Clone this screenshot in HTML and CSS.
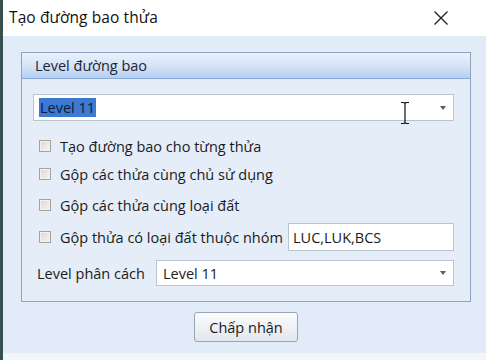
FILE: index.html
```html
<!DOCTYPE html>
<html lang="vi">
<head>
<meta charset="utf-8">
<title>Tạo đường bao thửa</title>
<link rel="stylesheet" href="styles.css">
</head>
<body>
<div class="window">
  <div class="titlebar">
    <span class="title">Tạo đường bao thửa</span>
    <svg class="close" width="16" height="16" viewBox="0 0 16 16"><path d="M1.5 1.5 L14.5 14.5 M14.5 1.5 L1.5 14.5" stroke="#1e1e1e" stroke-width="1.3" fill="none"/></svg>
  </div>
  <div class="content">
    <div class="group">
      <div class="group-head">Level đường bao</div>
      <div class="group-body">
        <div class="combo combo-main">
          <span class="sel">Level 11</span>
          <span class="caret"></span>
          <svg class="ibeam" width="10" height="24" viewBox="0 0 10 24"><path d="M1 1.5 H4 L5 2.5 L6 1.5 H9 M5 2.5 V21.5 M1 22.5 H4 L5 21.5 L6 22.5 H9" stroke="#111" stroke-width="1.2" fill="none"/></svg>
        </div>
        <div class="check"><span class="box"></span><span class="label">Tạo đường bao cho từng thửa</span></div>
        <div class="check"><span class="box"></span><span class="label">Gộp các thửa cùng chủ sử dụng</span></div>
        <div class="check third"><span class="box"></span><span class="label">Gộp các thửa cùng loại đất</span></div>
        <div class="check-row">
          <div class="check clip"><span class="box"></span><span class="label">Gộp thửa có loại đất thuộc nhóm</span></div>
          <div class="textbox">LUC,LUK,BCS</div>
        </div>
        <div class="field-row">
          <span class="field-label">Level phân cách</span>
          <div class="combo combo-small"><span class="value">Level 11</span><span class="caret"></span></div>
        </div>
      </div>
    </div>
    <div class="actions"><button class="btn" type="button">Chấp nhận</button></div>
  </div>
  <div class="bottom"></div>
</div>
</body>
</html>
```

FILE: styles.css
```css
html, body {
  margin: 0;
  padding: 0;
  background: #ffffff;
}
body {
  width: 486px;
  height: 360px;
  overflow: hidden;
  font-family: "Open Sans", "Noto Sans", "DejaVu Sans", sans-serif;
  color: #1b1b1b;
}
.window {
  width: 486px;
  height: 360px;
  box-sizing: border-box;
  border-left: 3px solid #37504d;
  display: flex;
  flex-direction: column;
}
.titlebar {
  height: 36px;
  flex: 0 0 36px;
  background: #ffffff;
  display: flex;
  align-items: center;
  justify-content: space-between;
  padding: 0 37px 2px 6px;
  box-sizing: border-box;
}
.title {
  font-size: 15.5px;
  color: #111;
  letter-spacing: 0.1px;
}
.close {
  display: block;
  margin-top: 1px;
}
.content {
  flex: 0 0 317px;
  height: 317px;
  box-sizing: border-box;
  background: #e2ebf8;
  padding: 16px 15px 0 18px;
  display: flex;
  flex-direction: column;
}
.group {
  height: 250px;
  box-sizing: border-box;
  border: 1px solid #8fa3c0;
  background: #e5edf9;
  display: flex;
  flex-direction: column;
}
.group-head {
  height: 26px;
  flex: 0 0 26px;
  box-sizing: border-box;
  border-bottom: 1px solid #88aadb;
  background: linear-gradient(to bottom, #eaf1fb 0%, #d6e4f7 50%, #b6cff1 100%);
  padding-left: 13px;
  display: flex;
  align-items: center;
  font-size: 14.5px;
  color: #1d2433;
}
.group-body {
  padding: 15px 16px 0 11px;
  display: flex;
  flex-direction: column;
}
.combo {
  position: relative;
  box-sizing: border-box;
  border: 1px solid #b9c4d3;
  background: #ffffff;
  display: flex;
  align-items: center;
  font-size: 14.5px;
}
.combo-main {
  height: 27px;
  padding-left: 5px;
}
.sel {
  background: #3c7ad2;
  color: #0d1a38;
  padding: 0 1px;
  line-height: 19px;
  height: 19px;
}
.caret {
  position: absolute;
  right: 7px;
  top: 50%;
  margin-top: -2px;
  width: 0;
  height: 0;
  border-left: 3.5px solid transparent;
  border-right: 3.5px solid transparent;
  border-top: 4px solid #5c5c5c;
}
.ibeam {
  position: absolute;
  left: 366px;
  top: 6px;
}
.check {
  height: 28px;
  display: flex;
  align-items: center;
  padding-left: 6px;
  font-size: 14.5px;
  white-space: nowrap;
}
.combo-main + .check {
  margin-top: 11px;
}
.check.third {
  margin-top: 3px;
}
.box {
  width: 12px;
  height: 12px;
  flex: 0 0 12px;
  box-sizing: border-box;
  border: 1px solid #a3a3a3;
  background: linear-gradient(135deg, #d9d5cf 0%, #ece9e4 55%, #f7f6f3 100%);
  box-shadow: inset 0 0 0 1px #f4f2ee;
  margin-right: 9px;
}
.check-row {
  height: 30px;
  margin-top: 3px;
  display: flex;
  align-items: center;
}
.check.clip {
  flex: 0 0 251px;
  width: 251px;
  overflow: hidden;
  box-sizing: border-box;
}
.textbox {
  flex: 1;
  height: 28px;
  margin-left: 4px;
  box-sizing: border-box;
  border: 1px solid #b9c4d3;
  background: #ffffff;
  display: flex;
  align-items: center;
  padding-left: 4px;
  font-size: 14.5px;
}
.field-row {
  margin-top: 8px;
  height: 26px;
  display: flex;
  align-items: center;
}
.field-label {
  flex: 0 0 119px;
  padding-left: 4px;
  font-size: 14.5px;
}
.combo-small {
  flex: 1;
  height: 26px;
  padding-left: 6px;
}
.actions {
  display: flex;
  justify-content: center;
  margin-top: 10px;
}
.btn {
  width: 104px;
  height: 30px;
  box-sizing: border-box;
  border: 1px solid #9aa4b3;
  border-radius: 3px;
  background: linear-gradient(to bottom, #fbfcfd 0%, #eef1f5 50%, #e2e7ee 100%);
  font-family: "Open Sans", "Noto Sans", sans-serif;
  font-size: 14.5px;
  color: #1b1b1b;
  padding: 0;
}
.bottom {
  flex: 1;
  background: #f2f5f9;
}
```
